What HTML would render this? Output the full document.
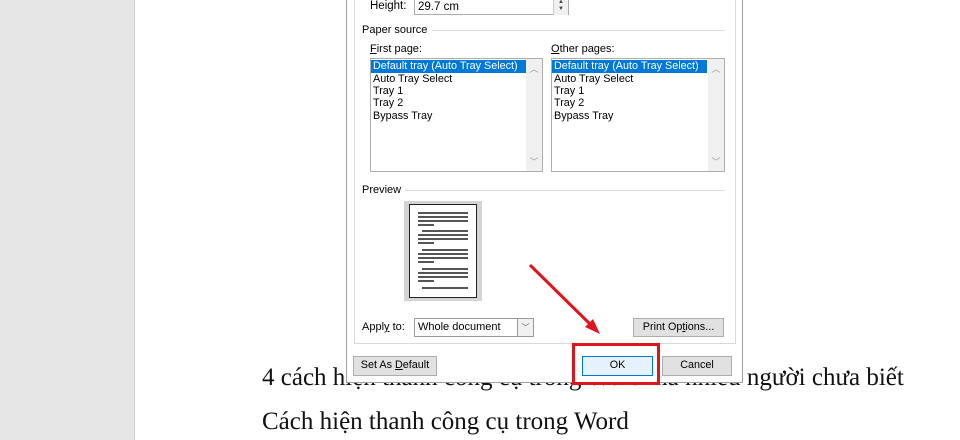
<!DOCTYPE html>
<html><head><style>
*{margin:0;padding:0;box-sizing:border-box}
body{width:960px;height:440px;overflow:hidden;background:#fff;position:relative;font-family:"Liberation Sans",sans-serif;font-size:11px;color:#000}
.a{position:absolute}
.t{font-family:"Liberation Serif","Noto Serif CJK SC",serif;font-size:25px;white-space:nowrap;color:#111}
.lb{border:1px solid #abadb3;background:#fff}
.it{position:absolute;left:2px;font-size:10.8px;line-height:12px;white-space:nowrap}
.btn{position:absolute;background:#e1e1e1;border:1px solid #adadad;font-size:10.8px;text-align:center;line-height:17px}
.hl{height:1px;background:#dcdcdc;position:absolute}
.pl{position:absolute;height:2px;background:#555}
</style></head><body>
<div class="a" style="left:0;top:0;width:135px;height:440px;background:#e6e6e6;border-right:1px solid #cfcfcf"></div>
<div class="a t" style="left:262px;top:364px">4 cách hiện thanh công cụ trong Word mà nhiều người chưa biết</div>
<div class="a t" style="left:262px;top:408px">Cách hiện thanh công cụ trong Word</div>

<div class="a" style="left:346px;top:-2px;width:397px;height:385px;background:#fff;border:1px solid #a0a0a0;border-top:none">
 <div class="a" style="left:7px;top:0;width:382px;height:346px;border:1px solid #d9d9d9;border-top:none"></div>
</div>
<div class="a" style="left:370px;top:0px;font-size:11.5px">Height:</div>
<div class="a lb" style="left:414px;top:-1px;width:155px;height:16px"><span style="position:absolute;left:3px;top:1px;font-size:11.5px">29.7 cm</span></div>
<div class="a" style="left:553px;top:-1px;width:15px;height:16px;border-left:1px solid #ccc;background:#f0f0f0;font-size:6px;line-height:7px;text-align:center;color:#444">▲<br>▼</div>
<div class="a" style="left:362px;top:24px">Paper source</div>
<div class="hl" style="left:432px;top:30px;width:293px"></div>
<div class="a" style="left:370px;top:43px"><u>F</u>irst page:</div>
<div class="a" style="left:551px;top:43px"><u>O</u>ther pages:</div>
<div class="a lb" style="left:370px;top:58px;width:173px;height:114px">
 <div class="a" style="left:0;top:1px;width:155px;height:13px;background:#0078d7"></div>
 <div class="it" style="top:1px;color:#fff">Default tray (Auto Tray Select)</div>
 <div class="it" style="top:14px">Auto Tray Select</div><div class="it" style="top:26px">Tray 1</div><div class="it" style="top:38px">Tray 2</div><div class="it" style="top:51px">Bypass Tray</div>
 <div class="a" style="right:0;top:0;width:16px;height:112px;background:#f0f0f0;color:#999;font-size:9px;text-align:center"><div style="margin-top:3px">︿</div><div style="position:absolute;bottom:3px;width:16px">﹀</div></div>
</div>
<div class="a lb" style="left:551px;top:58px;width:174px;height:114px">
 <div class="a" style="left:0;top:1px;width:155px;height:13px;background:#0078d7"></div>
 <div class="it" style="top:1px;color:#fff">Default tray (Auto Tray Select)</div>
 <div class="it" style="top:14px">Auto Tray Select</div><div class="it" style="top:26px">Tray 1</div><div class="it" style="top:38px">Tray 2</div><div class="it" style="top:51px">Bypass Tray</div>
 <div class="a" style="right:0;top:0;width:16px;height:112px;background:#f0f0f0;color:#999;font-size:9px;text-align:center"><div style="margin-top:3px">︿</div><div style="position:absolute;bottom:3px;width:16px">﹀</div></div>
</div>
<div class="a" style="left:362px;top:184px">Preview</div>
<div class="hl" style="left:405px;top:190px;width:320px"></div>
<div class="a" style="left:404px;top:201px;width:78px;height:100px;background:#d4d4d4"></div>
<div class="a" style="left:409px;top:204px;width:68px;height:94px;background:#fff;border:1px solid #222"></div>
<div class="pl" style="left:418px;top:212px;width:50px"></div><div class="pl" style="left:418px;top:216px;width:50px"></div><div class="pl" style="left:418px;top:220px;width:50px"></div><div class="pl" style="left:418px;top:224px;width:16px"></div>
<div class="pl" style="left:422px;top:230px;width:46px"></div><div class="pl" style="left:418px;top:234px;width:50px"></div><div class="pl" style="left:418px;top:238px;width:50px"></div><div class="pl" style="left:418px;top:242px;width:16px"></div>
<div class="pl" style="left:422px;top:249px;width:46px"></div><div class="pl" style="left:418px;top:253px;width:50px"></div><div class="pl" style="left:418px;top:257px;width:50px"></div><div class="pl" style="left:418px;top:261px;width:16px"></div>
<div class="pl" style="left:422px;top:268px;width:46px"></div><div class="pl" style="left:418px;top:272px;width:50px"></div><div class="pl" style="left:418px;top:276px;width:50px"></div><div class="pl" style="left:418px;top:280px;width:16px"></div>
<div class="pl" style="left:422px;top:287px;width:46px"></div>
<div class="a" style="left:362px;top:321px">Appl<u>y</u> to:</div>
<div class="a lb" style="left:414px;top:318px;width:120px;height:19px;border-color:#999"><span style="position:absolute;left:3px;top:2px">Whole document</span><span style="position:absolute;right:0;top:0;width:16px;height:17px;border-left:1px solid #999;background:#f0f0f0;text-align:center;font-size:8px;line-height:17px;color:#555">﹀</span></div>
<div class="btn" style="left:633px;top:318px;width:91px;height:19px">Print Op<u>t</u>ions...</div>
<div class="btn" style="left:353px;top:356px;width:84px;height:20px">Set As <u>D</u>efault</div>
<div class="btn" style="left:582px;top:356px;width:71px;height:20px;background:#e5f1fb;border-color:#0078d7">OK</div>
<div class="btn" style="left:662px;top:356px;width:70px;height:20px">Cancel</div>
<div class="a" style="left:572px;top:343px;width:88px;height:42px;border:3px solid #e0141c"></div>
<svg class="a" style="left:0;top:0" width="960" height="440"><line x1="530" y1="265" x2="592" y2="326" stroke="#e0141c" stroke-width="3"/><polygon points="600,334 585,327 593,319" fill="#e0141c"/></svg>
</body></html>
